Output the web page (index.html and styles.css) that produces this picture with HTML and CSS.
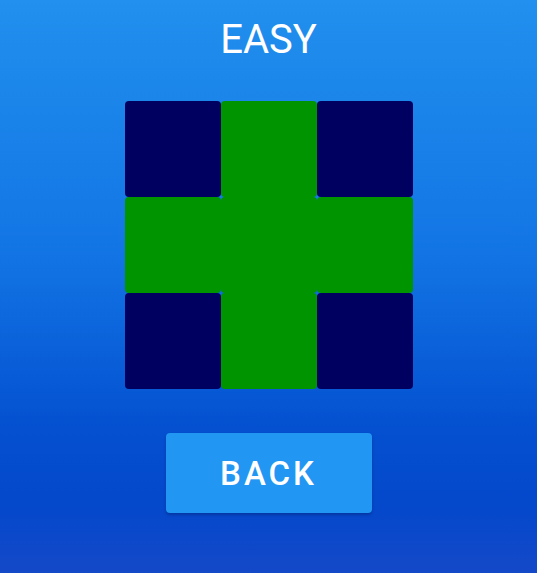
FILE: index.html
```html
<!DOCTYPE html>
<html>
<head>
<meta charset="utf-8">
<link rel="stylesheet" href="styles.css">
</head>
<body>
<div class="screen">
  <h1 class="title">EASY</h1>
  <div class="board">
    <div class="cell off"></div>
    <div class="cell on"></div>
    <div class="cell off"></div>
    <div class="cell on"></div>
    <div class="cell on"></div>
    <div class="cell on"></div>
    <div class="cell off"></div>
    <div class="cell on"></div>
    <div class="cell off"></div>
  </div>
  <button class="back">BACK</button>
</div>
</body>
</html>
```
FILE: styles.css
```css
html, body {
  margin: 0;
  padding: 0;
}
.screen {
  width: 537px;
  height: 573px;
  display: flex;
  flex-direction: column;
  align-items: center;
  background: linear-gradient(to bottom, #2190ee 0%, #1274e4 45%, #0450d0 75%, #0448cc 88%, #1449c8 100%);
  font-family: Roboto, "Liberation Sans", sans-serif;
  overflow: hidden;
}
.title {
  margin: 16px 0 0 0;
  font-size: 40px;
  font-weight: 400;
  line-height: 47px;
  color: #ffffff;
}
.board {
  margin-top: 38px;
  display: grid;
  grid-template-columns: repeat(3, 96px);
  grid-template-rows: repeat(3, 96px);
}
.cell {
  border-radius: 4px;
}
.off {
  background: #000060;
}
.on {
  background: #009400;
}
.back {
  margin-top: 44px;
  width: 206px;
  height: 80px;
  border: none;
  border-radius: 4px;
  background: #2196f3;
  color: #ffffff;
  font-family: Roboto, "Liberation Sans", sans-serif;
  font-size: 33px;
  font-weight: 500;
  letter-spacing: 3px;
  box-shadow: 0 2px 3px rgba(0, 0, 40, 0.25);
  padding: 0;
}
```
